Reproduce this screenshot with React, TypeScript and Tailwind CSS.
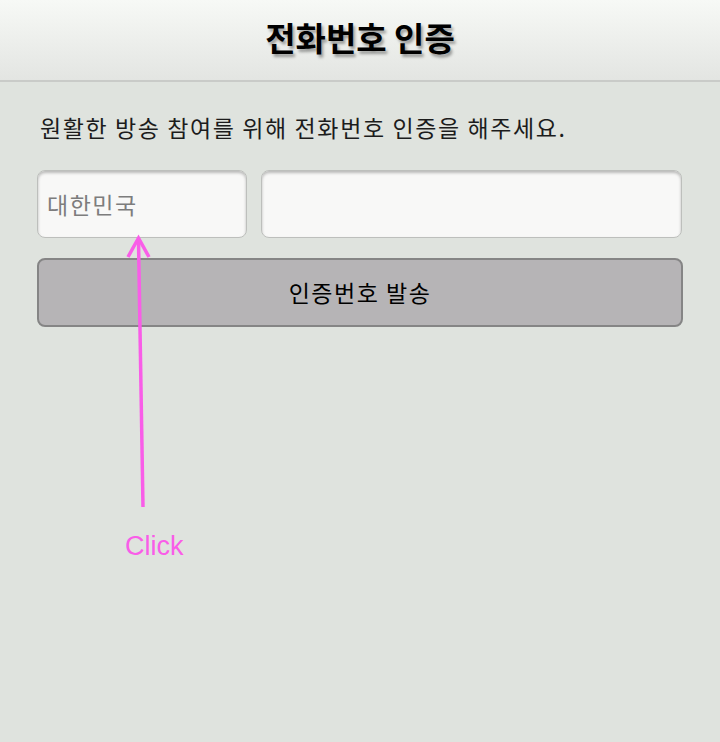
export default function App() {
  return (
    <div className="relative w-[720px] h-[742px] bg-[#dfe3de] font-['Noto_Sans_CJK_KR',sans-serif] overflow-hidden">
      {/* 상단 타이틀 바 */}
      <header className="h-[82px] flex items-center justify-center bg-gradient-to-b from-[#f7f9f6] to-[#e3e5e2] border-b-2 border-[#c9cbc8]">
        <h1 className="text-[33px] font-bold text-black [text-shadow:2px_3px_3px_rgba(0,0,0,0.35)] -mt-[5px]">
          전화번호 인증
        </h1>
      </header>

      <main className="px-[37px] pt-[27px]">
        <p className="text-[23px] tracking-[1.6px] text-[#1c1c1c] pl-[3px] leading-[36px]">
          원활한 방송 참여를 위해 전화번호 인증을 해주세요.
        </p>

        <div className="flex gap-[14px] mt-[25px] pr-[1px]">
          <div className="w-[210px] h-[68px] rounded-[8px] border border-[#bdbfbc] bg-[#f8f8f7] shadow-[inset_0_2px_3px_rgba(0,0,0,0.25)] flex items-center px-[9px]">
            <span className="text-[23px] tracking-[1.5px] text-[#7d7d7d]">대한민국</span>
          </div>
          <div className="flex-1 h-[68px] rounded-[8px] border border-[#bdbfbc] bg-[#f8f8f7] shadow-[inset_0_2px_3px_rgba(0,0,0,0.25)]" />
        </div>

        <button className="mt-[20px] w-[646px] h-[69px] rounded-[8px] border-2 border-[#858585] bg-[#b6b4b6] flex items-center justify-center text-[23px] tracking-[1.5px] text-black">
          인증번호 발송
        </button>
      </main>

      {/* 안내 화살표 */}
      <svg className="absolute left-0 top-0" width="720" height="742">
        <line x1="143" y1="507" x2="138.5" y2="240" stroke="#f95de8" strokeWidth="3.5" />
        <polyline points="128,257 138.5,238 149,257" fill="none" stroke="#f95de8" strokeWidth="3.5" />
      </svg>
      <span className="absolute left-[125px] top-[526px] text-[27px] text-[#f95de8] font-['Liberation_Sans',sans-serif]">
        Click
      </span>
    </div>
  );
}
